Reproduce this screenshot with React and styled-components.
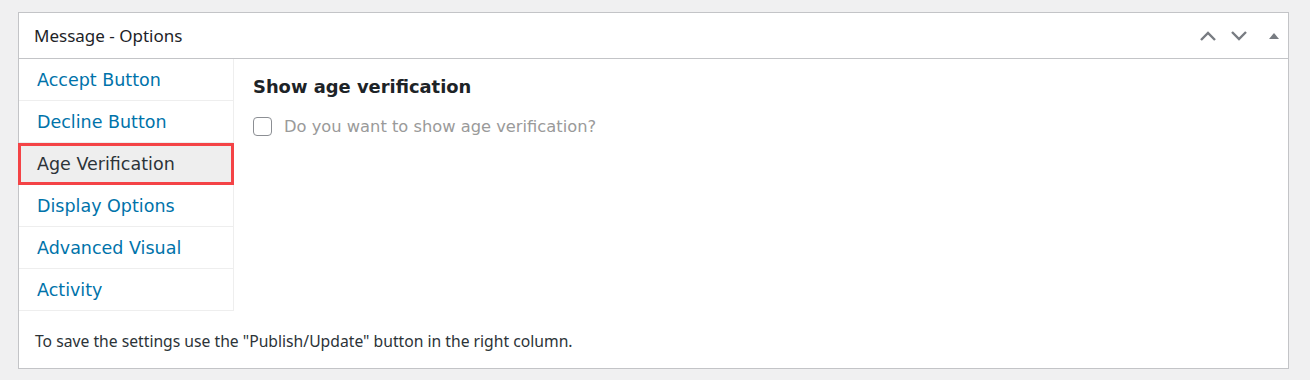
import React from 'react';
import styled, { createGlobalStyle } from 'styled-components';

const GlobalStyle = createGlobalStyle`
  html, body {
    margin: 0;
    padding: 0;
    background: #f0f0f1;
  }
  body {
    padding: 12px 21px 0 18px;
  }
`;

const StyledPanel = styled.div`
  background: #fff;
  border: 1px solid #c3c4c7;
  height: 357px;
  box-sizing: border-box;
  display: flex;
  flex-direction: column;
`;

const StyledHeader = styled.div`
  height: 46px;
  box-sizing: border-box;
  border-bottom: 1px solid #c3c4c7;
  display: flex;
  align-items: center;
  justify-content: space-between;
  padding: 0 4px 0 15px;
`;

const StyledTitle = styled.div`
  font-family: 'Noto Sans', sans-serif;
  font-size: 17px;
  color: #1d2327;
`;

const StyledActions = styled.div`
  display: flex;
  align-items: center;
  gap: 9px;
`;

const StyledIconButton = styled.span`
  display: flex;
  align-items: center;
  justify-content: center;
  width: ${(p) => p.$w || 22}px;
  height: 22px;
  margin-left: ${(p) => p.$offset || 0}px;
`;

const StyledBody = styled.div`
  display: flex;
  align-items: flex-start;
`;

const StyledNav = styled.ul`
  list-style: none;
  margin: 0;
  padding: 0;
  width: 214px;
  border-right: 1px solid #eeeeee;
`;

const StyledNavItem = styled.li`
  height: 42px;
  box-sizing: border-box;
  border-bottom: 1px solid #eeeeee;
  display: flex;
  align-items: center;
  padding-left: 18px;
  font-family: 'DejaVu Sans', Verdana, sans-serif;
  font-size: 17.5px;
  color: ${(p) => (p.$active ? '#2c3338' : '#0073aa')};
  background: ${(p) => (p.$active ? '#eeeeee' : 'transparent')};
  outline: ${(p) => (p.$active ? '3px solid #f44346' : 'none')};
  outline-offset: -3px;
  ${(p) => p.$active && 'margin-left: -1px; padding-left: 19px; width: calc(100% + 2px); margin-right: -1px;'}
`;

const StyledContent = styled.div`
  flex: 1;
  padding: 17px 19px;
`;

const StyledHeading = styled.h3`
  margin: 0 0 20px;
  font-family: 'DejaVu Sans', Verdana, sans-serif;
  font-size: 17.9px;
  font-weight: bold;
  color: #1d2327;
`;

const StyledCheckRow = styled.label`
  display: flex;
  align-items: center;
  gap: 12px;
  font-family: 'DejaVu Sans', Verdana, sans-serif;
  font-size: 16.3px;
  color: #9a9a9a;
`;

const StyledCheckbox = styled.span`
  width: 19px;
  height: 19px;
  box-sizing: border-box;
  border: 1px solid #8c8f94;
  border-radius: 4px;
  background: #fff;
`;

const StyledFooter = styled.div`
  margin-top: auto;
  padding: 0 16px 16px;
  font-family: 'Noto Sans', sans-serif;
  font-size: 15.7px;
  color: #2c3338;
`;

const Chevron = ({ up }) => (
  <svg width="18" height="10" viewBox="0 0 18 10">
    <path
      d={up ? 'M2 9 L9 2 L16 9' : 'M2 1 L9 8 L16 1'}
      fill="none"
      stroke="#787c82"
      strokeWidth="2.4"
    />
  </svg>
);

const navItems = [
  'Accept Button',
  'Decline Button',
  'Age Verification',
  'Display Options',
  'Advanced Visual',
  'Activity',
];

const App = () => {
  return (
    <>
      <GlobalStyle />
      <StyledPanel>
        <StyledHeader>
          <StyledTitle>Message - Options</StyledTitle>
          <StyledActions>
            <StyledIconButton><Chevron up /></StyledIconButton>
            <StyledIconButton><Chevron /></StyledIconButton>
            <StyledIconButton $w={20} $offset={5}>
              <svg width="10" height="8" viewBox="0 0 10 8">
                <path d="M0 7 L5 1 L10 7 Z" fill="#787c82" />
              </svg>
            </StyledIconButton>
          </StyledActions>
        </StyledHeader>
        <StyledBody>
          <StyledNav>
            {navItems.map((item) => (
              <StyledNavItem key={item} $active={item === 'Age Verification'}>
                {item}
              </StyledNavItem>
            ))}
          </StyledNav>
          <StyledContent>
            <StyledHeading>Show age verification</StyledHeading>
            <StyledCheckRow>
              <StyledCheckbox />
              Do you want to show age verification?
            </StyledCheckRow>
          </StyledContent>
        </StyledBody>
        <StyledFooter>
          To save the settings use the "Publish/Update" button in the right column.
        </StyledFooter>
      </StyledPanel>
    </>
  );
};

export default App;
